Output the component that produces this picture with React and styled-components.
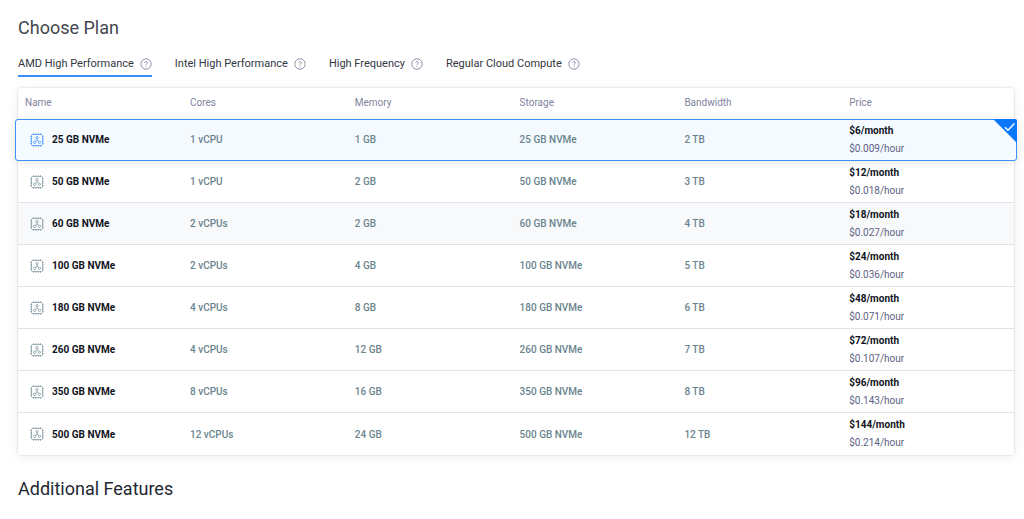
import React, { useState } from "react";
import styled, { createGlobalStyle } from "styled-components";

const TABS = [
  "AMD High Performance",
  "Intel High Performance",
  "High Frequency",
  "Regular Cloud Compute",
];

const COLUMNS = ["Name", "Cores", "Memory", "Storage", "Bandwidth", "Price"];

const PLANS = [
  { size: "25 GB NVMe", cores: "1 vCPU", memory: "1 GB", bandwidth: "2 TB", month: "$6", hour: "$0.009" },
  { size: "50 GB NVMe", cores: "1 vCPU", memory: "2 GB", bandwidth: "3 TB", month: "$12", hour: "$0.018" },
  { size: "60 GB NVMe", cores: "2 vCPUs", memory: "2 GB", bandwidth: "4 TB", month: "$18", hour: "$0.027", highlighted: true },
  { size: "100 GB NVMe", cores: "2 vCPUs", memory: "4 GB", bandwidth: "5 TB", month: "$24", hour: "$0.036" },
  { size: "180 GB NVMe", cores: "4 vCPUs", memory: "8 GB", bandwidth: "6 TB", month: "$48", hour: "$0.071" },
  { size: "260 GB NVMe", cores: "4 vCPUs", memory: "12 GB", bandwidth: "7 TB", month: "$72", hour: "$0.107" },
  { size: "350 GB NVMe", cores: "8 vCPUs", memory: "16 GB", bandwidth: "8 TB", month: "$96", hour: "$0.143" },
  { size: "500 GB NVMe", cores: "12 vCPUs", memory: "24 GB", bandwidth: "12 TB", month: "$144", hour: "$0.214" },
];

const HelpIcon = () => (
  <svg width="12" height="12" viewBox="0 0 12 12" fill="none" stroke="#8388a8" aria-hidden="true">
    <circle cx="6" cy="6" r="5.2" strokeWidth="0.9" />
    <path d="M4.7 4.7a1.3 1.3 0 1 1 2 1.2c-.5.3-.7.5-.7 1" strokeWidth="0.9" />
    <path d="M6 7.8v1" strokeWidth="0.9" />
  </svg>
);

const ChipIcon = () => (
  <svg width="14" height="14" viewBox="0 0 14 14" fill="none" stroke="currentColor" aria-hidden="true">
    <rect x="1.5" y="1.5" width="11" height="11" rx="1" strokeWidth="0.7" />
    <path
      d="M3.5 0v1.5M5.8 0v1.5M8.2 0v1.5M10.5 0v1.5M3.5 12.5V14M5.8 12.5V14M8.2 12.5V14M10.5 12.5V14M0 3.5h1.5M0 5.8h1.5M0 8.2h1.5M0 10.5h1.5M12.5 3.5H14M12.5 5.8H14M12.5 8.2H14M12.5 10.5H14"
      strokeWidth="0.6"
    />
    <circle cx="7" cy="4.7" r="1.2" strokeWidth="0.7" />
    <circle cx="4.6" cy="9.3" r="1.2" strokeWidth="0.7" />
    <circle cx="9.4" cy="9.3" r="1.2" strokeWidth="0.7" />
    <path d="M7 5.9v1.3M7 7.2L5.4 8.4M7 7.2l1.6 1.2" strokeWidth="0.7" />
  </svg>
);

const SelectedCorner = () => (
  <Corner viewBox="0 0 24 24" aria-hidden="true">
    <path d="M0 0h22a2 2 0 0 1 2 2v22z" fill="#0a78fc" />
    <path d="M12 8.2l3 3L21.4 4.6" fill="none" stroke="#fff" strokeWidth="1.4" />
  </Corner>
);

const PlanRow = ({ plan, selected, onSelect }) => (
  <Row $selected={selected} $highlighted={plan.highlighted} onClick={onSelect}>
    <Cell>
      <PlanName $selected={selected}>
        <PlanRadio type="radio" name="plan" checked={selected} onChange={onSelect} />
        <ChipIcon />
        <span>{plan.size}</span>
      </PlanName>
    </Cell>
    <Cell>{plan.cores}</Cell>
    <Cell>{plan.memory}</Cell>
    <Cell>{plan.size}</Cell>
    <Cell>{plan.bandwidth}</Cell>
    <Cell>
      <MonthPrice>{plan.month}/month</MonthPrice>
      <HourPrice>{plan.hour}/hour</HourPrice>
      {selected && <SelectedCorner />}
    </Cell>
  </Row>
);

export default function App() {
  const [activeTab, setActiveTab] = useState(0);
  const [selectedPlan, setSelectedPlan] = useState(0);

  return (
    <>
      <GlobalStyle />
      <Page>
        <Title>Choose Plan</Title>
        <Tabs role="tablist">
          {TABS.map((tab, index) => (
            <Tab
              key={tab}
              type="button"
              role="tab"
              aria-selected={index === activeTab}
              $active={index === activeTab}
              onClick={() => setActiveTab(index)}
            >
              {tab}
              <HelpIcon />
            </Tab>
          ))}
        </Tabs>
        <PlanTable>
          <thead>
            <tr>
              {COLUMNS.map((column) => (
                <HeadCell key={column} scope="col">
                  {column}
                </HeadCell>
              ))}
            </tr>
          </thead>
          <tbody>
            {PLANS.map((plan, index) => (
              <PlanRow
                key={plan.size}
                plan={plan}
                selected={index === selectedPlan}
                onSelect={() => setSelectedPlan(index)}
              />
            ))}
          </tbody>
        </PlanTable>
        <SectionTitle>Additional Features</SectionTitle>
      </Page>
    </>
  );
}

const GlobalStyle = createGlobalStyle`
  * {
    box-sizing: border-box;
  }

  body {
    margin: 0;
    background-color: #fff;
    font-family: Roboto, sans-serif;
  }
`;

const Page = styled.main`
  padding: 16px 10px 16px 18px;
`;

const Title = styled.h1`
  margin: 0;
  color: #43474f;
  font-size: 18px;
  font-weight: 400;
  line-height: 24px;
`;

const SectionTitle = styled(Title).attrs({ as: "h2" })`
  margin-top: 22px;
  color: #1f2733;
`;

const Tabs = styled.div`
  display: flex;
  gap: 23px;
  margin: 10px 0 11px;
`;

const Tab = styled.button`
  display: flex;
  align-items: center;
  gap: 6px;
  height: 27px;
  padding: 2px 0 0;
  border: 0;
  border-bottom: 2px solid ${({ $active }) => ($active ? "#3c8ff8" : "transparent")};
  background: none;
  color: #33373f;
  font-family: inherit;
  font-size: 11px;
  font-weight: 400;
  cursor: pointer;
`;

const PlanTable = styled.table`
  width: 100%;
  table-layout: fixed;
  border-spacing: 0;
  border-radius: 3px;
  box-shadow: 0 0 2px rgb(0 0 0 / 20%), 0 2px 12px rgb(0 0 0 / 7%);
`;

const HeadCell = styled.th`
  height: 31px;
  padding: 0 0 2px;
  color: #7f84a0;
  font-size: 10px;
  font-weight: 400;
  text-align: left;

  &:first-child {
    width: 172px;
    padding-left: 7px;
  }
`;

const Cell = styled.td`
  height: 42px;
  padding: 0;
  color: #6a848e;
  font-size: 10px;
  font-weight: 500;

  &:first-child {
    padding-left: 12px;
  }
`;

const Row = styled.tr`
  position: relative;
  background-color: ${({ $highlighted }) => ($highlighted ? "#f8f9fb" : "#fff")};
  cursor: pointer;

  &:not(:last-child) ${Cell} {
    border-bottom: 1px solid #e1e3e8;
  }

  ${({ $selected }) =>
    $selected &&
    `
      z-index: 1;

      && ${Cell} {
        border-bottom-color: transparent;
      }

      /* frame that sticks out on both sides of the table */
      ${Cell}:first-child::before {
        content: "";
        position: absolute;
        inset: 0 -3px;
        border: 1px solid #3c8ff8;
        border-radius: 3px;
        background-color: #f5faff;
        box-shadow: 0 2px 8px rgb(0 0 0 / 8%);
        z-index: -1;
      }
    `}
`;

const PlanName = styled.label`
  display: flex;
  align-items: center;
  gap: 8px;
  color: ${({ $selected }) => ($selected ? "#3c8ff8" : "#78919a")};
  cursor: pointer;

  span {
    color: #10131c;
    font-weight: 700;
  }
`;

const PlanRadio = styled.input`
  position: absolute;
  width: 1px;
  height: 1px;
  margin: 0;
  opacity: 0;
`;

const MonthPrice = styled.div`
  color: #10131c;
  font-weight: 700;
  line-height: 18px;
`;

const HourPrice = styled.div`
  color: #5c6284;
  font-weight: 400;
  line-height: 18px;
`;

const Corner = styled.svg`
  position: absolute;
  top: 0;
  right: -3px;
  width: 24px;
  height: 24px;
`;
